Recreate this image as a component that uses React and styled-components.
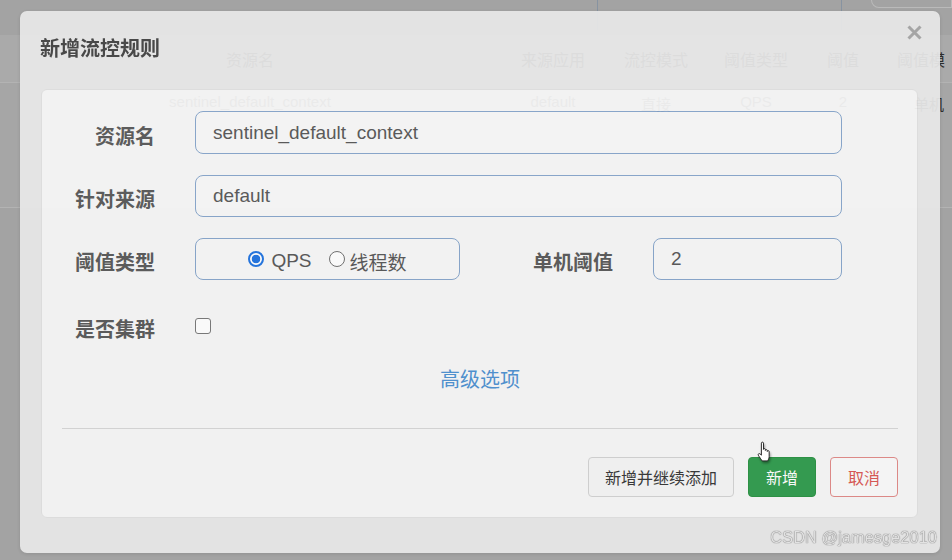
import React from 'react';
import styled, { createGlobalStyle } from 'styled-components';

const GlobalStyle = createGlobalStyle`
  html, body {
    margin: 0;
    padding: 0;
    background: #a3a3a3;
    overflow: hidden;
  }
  body {
    font-family: "Liberation Sans", "Noto Sans CJK SC", sans-serif;
  }
  * { box-sizing: border-box; }
`;

/* dimmed page behind the dialog */
const Page = styled.div`
  width: 952px;
  height: 560px;
  overflow: hidden;
  background: #a3a3a3;
`;

const TopBar = styled.div`
  display: flex;
  align-items: flex-start;
  height: 35px;
`;

const SearchBox = styled.div`
  margin-left: 597px;
  width: 271px;
  height: 30px;
  border-left: 1px solid #8793a1;
  border-right: 1px solid #8793a1;
`;

const SearchButton = styled.div`
  margin-left: 29px;
  width: 90px;
  height: 8px;
  border: 1px solid #bababa;
  border-top: none;
  border-radius: 0 0 0 9px;
`;

const TableRow = styled.div`
  display: grid;
  grid-template-columns: 140px 220px 140px 106px 100px 100px 74px 72px;
  height: ${p => p.$height}px;
  background: ${p => p.$bg};
  border-bottom: 1px solid #b3b3b3;
  align-items: ${p => (p.$head ? 'center' : 'start')};
  padding-top: ${p => (p.$head ? 0 : 10)}px;
  color: #2e2e2e;
  font-size: ${p => (p.$head ? 16 : 15)}px;
  white-space: nowrap;
`;

const Cell = styled.div`
  text-align: center;
`;

const EdgeCell = styled.div`
  padding-left: ${p => p.$pl}px;
  overflow: hidden;
`;

/* dialog */
const Modal = styled.div`
  position: fixed;
  left: 20px;
  top: 11px;
  width: 920px;
  height: 542px;
  padding: 0 22px 35px 21px;
  display: flex;
  flex-direction: column;
  background: #e8e8e8;
  border-radius: 7px;
  opacity: 0.94;
  box-shadow: 0 1px 4px rgba(0, 0, 0, 0.12);
`;

const Header = styled.div`
  display: flex;
  align-items: center;
  height: 79px;
  padding-bottom: 5px;
`;

const Title = styled.h4`
  margin: 0 0 0 -1px;
  font-size: 20px;
  font-weight: 700;
  color: #434343;
  font-family: "Noto Sans CJK SC", sans-serif;
`;

const Close = styled.button`
  align-self: flex-start;
  margin: 14px -4px 0 auto;
  padding: 0;
  width: 15px;
  height: 15px;
  border: none;
  background: none;
  display: flex;
`;

const Panel = styled.div`
  flex: 1;
  display: flex;
  flex-direction: column;
  padding: 21px 19px 20px 20px;
  background: #f7f7f7;
  border: 1px solid #e0e0e0;
  border-radius: 6px;
`;

const Row = styled.div`
  display: flex;
  align-items: center;
  height: ${p => p.$h}px;
  margin-top: ${p => p.$mt || 0}px;
  flex-shrink: 0;
`;

const Label = styled.label`
  width: ${p => p.$w || 93}px;
  margin-right: 40px;
  padding-top: 5px;
  text-align: right;
  font-family: "Noto Sans CJK SC", sans-serif;
  font-size: 20px;
  font-weight: 700;
  color: #575757;
  white-space: nowrap;
`;

const Input = styled.div`
  display: flex;
  align-items: center;
  width: ${p => p.$w}px;
  height: 100%;
  padding-left: 17px;
  border: 1px solid #86a5cb;
  border-radius: 8px;
  background: #f8f8f8;
  font-size: 19px;
  color: #555;
`;

const RadioGroup = styled.div`
  display: flex;
  align-items: center;
  justify-content: center;
  width: 265px;
  height: 100%;
  border: 1px solid #86a5cb;
  border-radius: 8px;
  background: #f8f8f8;
  font-size: 19px;
  color: #555;
`;

const RadioOption = styled.span`
  display: flex;
  align-items: center;
  gap: ${p => (p.$checked ? 7 : 5)}px;
  margin-left: ${p => (p.$first ? 0 : 17)}px;
  padding-top: 4px;
  font-family: "Liberation Sans", "Noto Sans CJK SC", sans-serif;
`;

const RadioDot = styled.span`
  width: 16px;
  height: 16px;
  border-radius: 50%;
  margin-top: -4px;
  border: ${p => (p.$checked ? '2px solid #1d72e0' : '1px solid #6e6e6e')};
  background: ${p =>
    p.$checked ? 'radial-gradient(circle, #1d72e0 0 4px, #ffffff 4.6px)' : '#ffffff'};
`;

const Checkbox = styled.span`
  width: 16px;
  height: 16px;
  border: 1.5px solid #767676;
  border-radius: 3px;
  background: #fff;
`;

const LinkRow = styled.div`
  display: flex;
  justify-content: center;
  align-items: center;
  height: 40px;
  margin-top: 11px;
  flex-shrink: 0;
`;

const AdvancedLink = styled.a`
  font-family: "Noto Sans CJK SC", sans-serif;
  font-size: 20px;
  color: #4a8fd0;
  text-decoration: none;
`;

const Divider = styled.hr`
  margin: 30px 0 0;
  border: none;
  border-top: 1px solid #d6d6d6;
  flex-shrink: 0;
`;

const Actions = styled.div`
  display: flex;
  justify-content: flex-end;
  gap: 14px;
  margin-top: 28px;
  flex-shrink: 0;
`;

const Button = styled.button`
  height: 40px;
  padding: 0 ${p => p.$px || 16}px;
  border-radius: 4px;
  font-family: "Noto Sans CJK SC", sans-serif;
  font-size: 16px;
  border: 1px solid ${p => p.$border};
  background: ${p => p.$bg};
  color: ${p => p.$color};
`;

const Watermark = styled.div`
  position: fixed;
  right: 15px;
  top: 528px;
  font-family: "Liberation Sans", sans-serif;
  font-size: 16.3px;
  color: #e2e2e2;
  text-shadow: 0 0 1px #777, 0 0 1px #777;
  letter-spacing: 0.1px;
`;

const Cursor = styled.svg`
  position: fixed;
  left: 756px;
  top: 441px;
  filter: drop-shadow(1px 2px 1px rgba(0, 0, 0, 0.35));
`;

const headers = ['', '资源名', '', '来源应用', '流控模式', '阈值类型', '阈值'];
const values = ['', 'sentinel_default_context', '', 'default', '直接', 'QPS', '2'];

export default function App() {
  return (
    <>
      <GlobalStyle />
      <Page>
        <TopBar>
          <SearchBox />
          <SearchButton />
        </TopBar>
        <TableRow $head $height={48} $bg="#aaaaaa">
          {headers.map((h, i) => (
            <Cell key={i}>{h}</Cell>
          ))}
          <EdgeCell $pl={17}>阈值模</EdgeCell>
        </TableRow>
        <TableRow $height={125} $bg="#a6a6a6">
          {values.map((v, i) => (
            <Cell key={i}>{v}</Cell>
          ))}
          <EdgeCell $pl={34}>单机</EdgeCell>
        </TableRow>
      </Page>

      <Modal>
        <Header>
          <Title>新增流控规则</Title>
          <Close aria-label="close">
            <svg width="15" height="15" viewBox="0 0 15 15">
              <path d="M1.5 1.5 L13.5 13.5 M13.5 1.5 L1.5 13.5" stroke="#a6a6a6" strokeWidth="3" />
            </svg>
          </Close>
        </Header>

        <Panel>
          <Row $h={43}>
            <Label>资源名</Label>
            <Input $w={647}>sentinel_default_context</Input>
          </Row>
          <Row $h={42} $mt={21}>
            <Label>针对来源</Label>
            <Input $w={647}>default</Input>
          </Row>
          <Row $h={42} $mt={21}>
            <Label>阈值类型</Label>
            <RadioGroup>
              <RadioOption $first $checked>
                <RadioDot $checked />
                QPS
              </RadioOption>
              <RadioOption>
                <RadioDot />
                线程数
              </RadioOption>
            </RadioGroup>
            <Label $w={153}>单机阈值</Label>
            <Input $w={189}>2</Input>
          </Row>
          <Row $h={42} $mt={25}>
            <Label>是否集群</Label>
            <Checkbox />
          </Row>
          <LinkRow>
            <AdvancedLink href="#">高级选项</AdvancedLink>
          </LinkRow>
          <Divider />
          <Actions>
            <Button $border="#d2d2d2" $bg="#f5f5f5" $color="#333" $px={16}>
              新增并继续添加
            </Button>
            <Button $border="#27903f" $bg="#2d9a4b" $color="#ffffff" $px={17}>
              新增
            </Button>
            <Button $border="#e08886" $bg="#fafafa" $color="#d9534f" $px={17}>
              取消
            </Button>
          </Actions>
        </Panel>
      </Modal>

      <Cursor width="15" height="22" viewBox="0 0 13 21">
        <path
          d="M4.5 2 C4.5 0.8 6.5 0.8 6.5 2 V8 C6.5 7 8.3 7 8.3 8 V9 C8.3 8 10.1 8 10.1 9 V10 C10.1 9 11.9 9 11.9 10 V15 C11.9 16.8 11 18 10.4 19 H5.2 C4.6 18 2.5 15.2 1.6 13.6 C1 12.5 2.2 11.5 3.2 12.3 L4.5 13.5 Z"
          fill="#ffffff"
          stroke="#222"
          strokeWidth="0.9"
          strokeLinejoin="round"
        />
      </Cursor>

      <Watermark>CSDN @jamesge2010</Watermark>
    </>
  );
}
